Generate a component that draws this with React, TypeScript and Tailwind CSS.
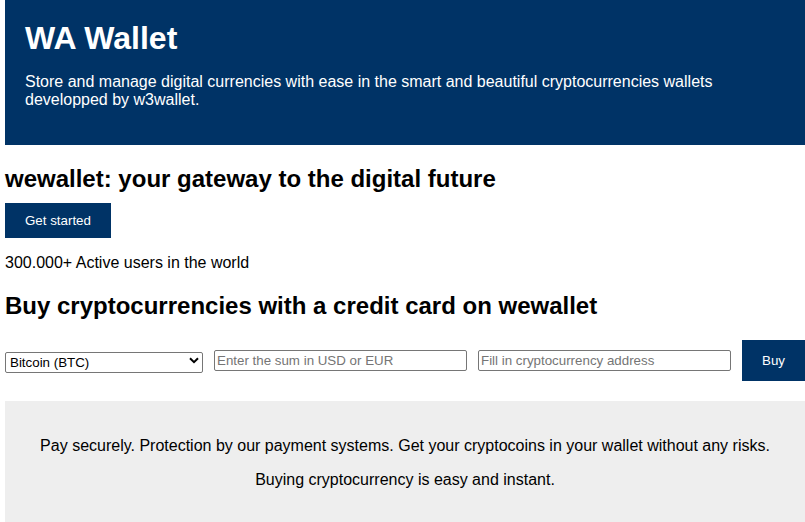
import React from "react";

export default function App() {
  return (
    <div
      className="w-[805px] min-h-[522px] overflow-hidden bg-white text-black"
      style={{ fontFamily: '"Liberation Sans", Arial, sans-serif' }}
    >
      <div className="pl-[5px]">
        <header className="bg-[#003366] px-5 pt-5 pb-[35px] text-white">
          <h1 className="m-0 text-[32px] font-bold leading-[37px]">WA Wallet</h1>
          <p className="mt-4 text-[16px] leading-[1.15]">
            Store and manage digital currencies with ease in the smart and beautiful cryptocurrencies wallets
            developped by w3wallet.
          </p>
        </header>

        <h2 className="mt-5 mb-[11px] text-[24px] font-bold leading-[27.6px]">
          wewallet: your gateway to the digital future
        </h2>
        <div className="flex">
          <button className="bg-[#003366] px-5 py-[10px] text-[13.33px] leading-[15px] text-white">
            Get started
          </button>
        </div>
        <p className="mt-4 text-[16px] leading-[1.15]">300.000+ Active users in the world</p>

        <h2 className="mt-[19px] mb-[21px] text-[24px] font-bold leading-[27.6px]">
          Buy cryptocurrencies with a credit card on wewallet
        </h2>

        <div className="flex items-center gap-[11px]">
          <div className="relative h-[21px] w-[198px] shrink-0">
            <select
              className="h-[21px] w-full appearance-none rounded-[2px] border border-[#767676] bg-white pl-[4px] pr-5 text-[13.33px] leading-[15px] text-black outline-none"
              defaultValue="btc"
            >
              <option value="btc">Bitcoin (BTC)</option>
              <option value="eth">Ethereum (ETH)</option>
              <option value="ltc">Litecoin (LTC)</option>
            </select>
            <svg
              className="pointer-events-none absolute right-[4px] top-[7px]"
              width="10"
              height="7"
              viewBox="0 0 10 7"
            >
              <path d="M1 1.2 L5 5.2 L9 1.2" fill="none" stroke="#000" strokeWidth="2" />
            </svg>
          </div>
          <input
            type="text"
            placeholder="Enter the sum in USD or EUR"
            className="h-[21px] w-[253px] shrink-0 rounded-[2px] border border-[#767676] bg-white px-[2px] text-[13.33px] leading-[15px] text-black outline-none placeholder:text-[#757575]"
          />
          <input
            type="text"
            placeholder="Fill in cryptocurrency address"
            className="h-[21px] w-[253px] shrink-0 rounded-[2px] border border-[#767676] bg-white px-[2px] text-[13.33px] leading-[15px] text-black outline-none placeholder:text-[#757575]"
          />
          <button className="h-[41px] shrink-0 bg-[#003366] px-5 text-[13.33px] leading-[15px] text-white">
            Buy
          </button>
        </div>

        <section className="mt-5 bg-[#eeeeee] pt-5 pb-[18px] text-center text-[16px] leading-[1.15]">
          <p className="mt-4">
            Pay securely. Protection by our payment systems. Get your cryptocoins in your wallet without any risks.
          </p>
          <p className="mt-[15px] mb-4">Buying cryptocurrency is easy and instant.</p>
        </section>
      </div>
    </div>
  );
}
